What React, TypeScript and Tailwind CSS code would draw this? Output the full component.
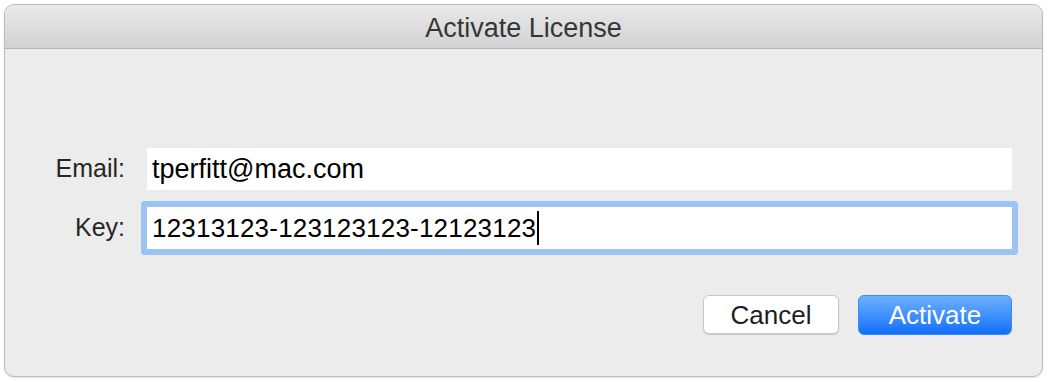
export default function App() {
  return (
    <div className="w-[1048px] h-[382px] bg-white pl-[4px] pt-[4px] font-['Liberation_Sans',Arial,sans-serif]">
      <div className="w-[1039px] h-[373px] flex flex-col rounded-[10px] border border-[#bcbcbc] bg-[#ececec] overflow-hidden shadow-[0_1px_2px_rgba(0,0,0,0.12)]">
        {/* Title bar */}
        <div className="h-[44px] shrink-0 flex items-center justify-center bg-gradient-to-b from-[#e9e9e9] to-[#d2d2d2] border-b border-[#b7b7b7]">
          <span className="text-[27px] text-[#363636] leading-none mt-[4px]">Activate License</span>
        </div>

        {/* Body */}
        <div className="flex flex-col pt-[99px] pr-[30px]">
          <div className="flex items-center">
            <label className="w-[120px] text-right text-[25px] text-[#262626]">Email:</label>
            <div className="ml-[22px] flex-1 h-[42px] bg-white flex items-center pl-[5px] text-[27px] text-black">
              tperfitt@mac.com
            </div>
          </div>

          <div className="flex items-center mt-[17px]">
            <label className="w-[120px] text-right text-[25px] text-[#262626]">Key:</label>
            <div className="ml-[22px] flex-1 h-[42px] bg-white flex items-center pl-[5px] text-[26px] tracking-[0.2px] text-black ring-[6px] ring-[#9bc4f3] rounded-[1px]">
              <span>12313123-123123123-12123123</span>
              <span className="ml-[1px] w-[2px] h-[34px] bg-black" />
            </div>
          </div>

          <div className="flex justify-end gap-[19px] mt-[46px]">
            <button className="w-[136px] h-[39px] rounded-[6px] bg-white border border-[#c8c8c8] shadow-[0_1px_1px_rgba(0,0,0,0.15)] text-[26px] text-[#1e1e1e] leading-none">
              Cancel
            </button>
            <button className="w-[154px] h-[40px] rounded-[6px] bg-gradient-to-b from-[#6cb0fd] to-[#0b6dfb] border border-[#3a8cf9] text-[26px] text-white leading-none">
              Activate
            </button>
          </div>
        </div>
      </div>
    </div>
  );
}
